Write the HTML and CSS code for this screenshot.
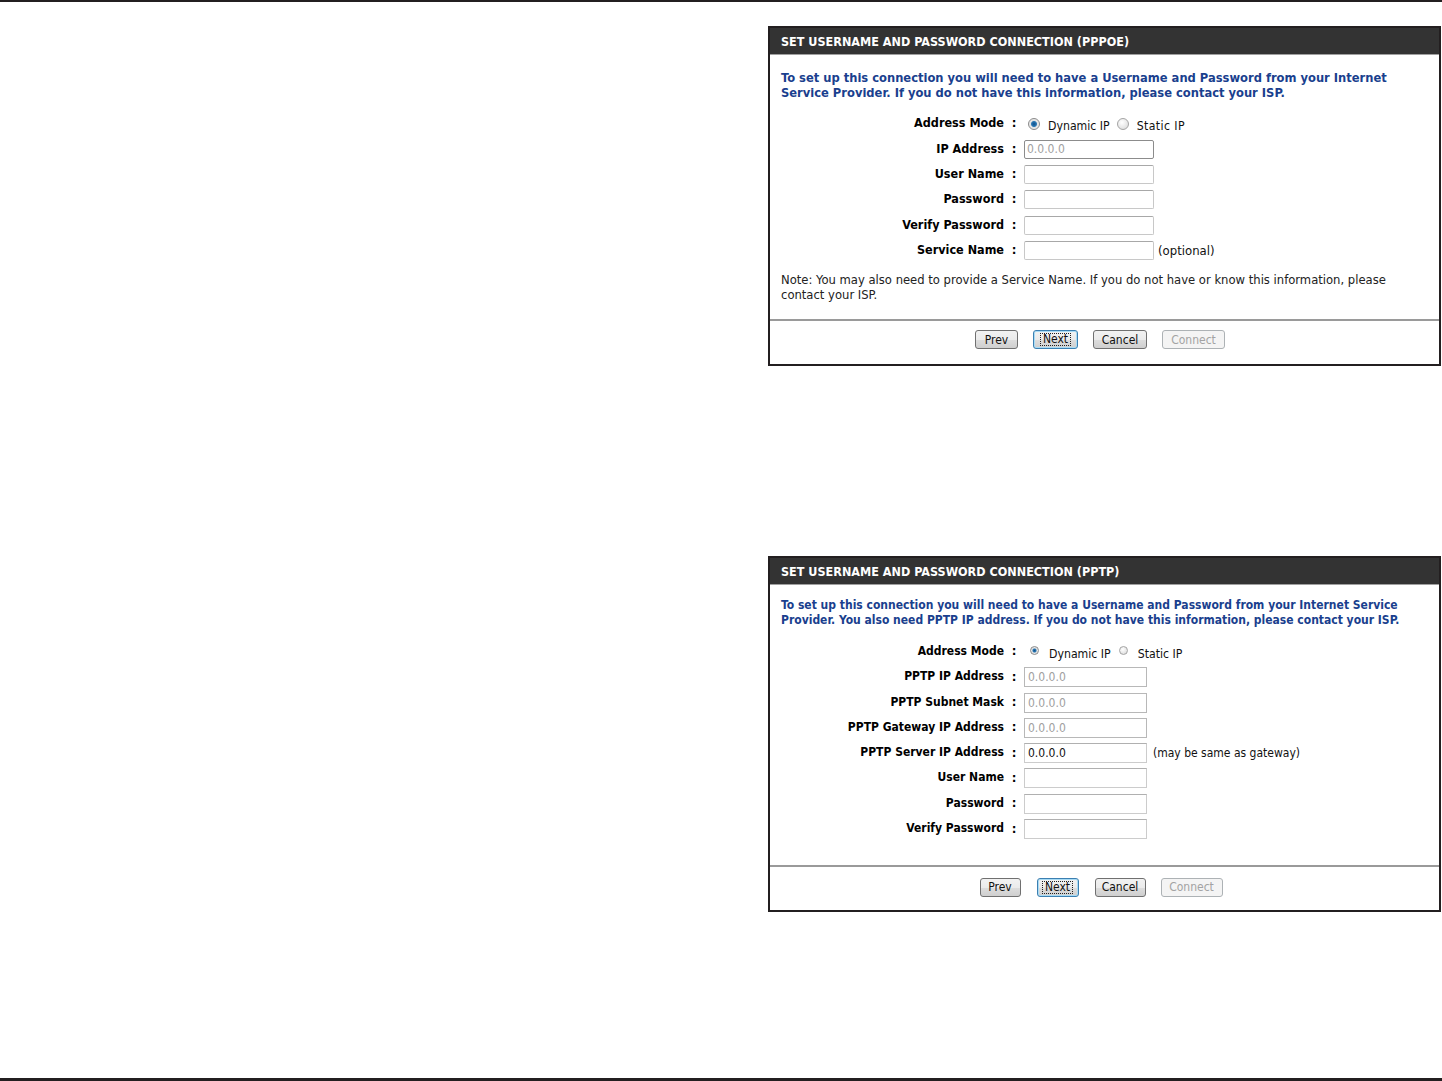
FILE: index.html
```html
<!DOCTYPE html>
<html lang="en">
  <head>
    <meta charset="UTF-8" />
    <title>Internet Connection Setup</title>
    <link rel="stylesheet" href="styles.css">
  </head>

  <body>
    <div class="page">
      <div class="topRule"></div>
      <div class="content">
        <!-- PPPoE -->
        <div class="box boxPppoe">
          <div class="boxTitle">SET USERNAME AND PASSWORD CONNECTION (PPPOE)</div>
          <div class="boxBody">
            <div class="intro">To set up this connection you will need to have a Username and Password from your Internet<br>Service Provider. If you do not have this information, please contact your ISP.</div>
            <div class="rows">
              <div class="row">
                <span class="label">Address Mode</span><span class="colon">:</span>
                <span class="radio on"></span><span class="radioText">Dynamic IP</span>
                <span class="radio"></span><span class="radioText wide">Static IP</span>
              </div>
              <div class="row">
                <span class="label">IP Address</span><span class="colon">:</span>
                <span class="field dim">0.0.0.0</span>
              </div>
              <div class="row">
                <span class="label">User Name</span><span class="colon">:</span>
                <span class="field"></span>
              </div>
              <div class="row">
                <span class="label">Password</span><span class="colon">:</span>
                <span class="field"></span>
              </div>
              <div class="row">
                <span class="label">Verify Password</span><span class="colon">:</span>
                <span class="field"></span>
              </div>
              <div class="row">
                <span class="label">Service Name</span><span class="colon">:</span>
                <span class="field"></span><span class="hint">(optional)</span>
              </div>
            </div>
            <div class="note">Note: You may also need to provide a Service Name. If you do not have or know this information, please<br>contact your ISP.</div>
          </div>
          <div class="buttons">
            <span class="btn bPrev">Prev</span>
            <span class="btn bNext focus"><span class="dots">Next</span></span>
            <span class="btn bCancel">Cancel</span>
            <span class="btn bConnect off">Connect</span>
          </div>
        </div>

        <!-- PPTP -->
        <div class="box boxPptp">
          <div class="boxTitle">SET USERNAME AND PASSWORD CONNECTION (PPTP)</div>
          <div class="boxBody">
            <div class="intro">To set up this connection you will need to have a Username and Password from your Internet Service<br>Provider. You also need PPTP IP address. If you do not have this information, please contact your ISP.</div>
            <div class="rows">
              <div class="row">
                <span class="label">Address Mode</span><span class="colon">:</span>
                <span class="radio on"></span><span class="radioText">Dynamic IP</span>
                <span class="radio"></span><span class="radioText">Static IP</span>
              </div>
              <div class="row">
                <span class="label">PPTP IP Address</span><span class="colon">:</span>
                <span class="field dim">0.0.0.0</span>
              </div>
              <div class="row">
                <span class="label">PPTP Subnet Mask</span><span class="colon">:</span>
                <span class="field dim">0.0.0.0</span>
              </div>
              <div class="row">
                <span class="label">PPTP Gateway IP Address</span><span class="colon">:</span>
                <span class="field dim">0.0.0.0</span>
              </div>
              <div class="row">
                <span class="label">PPTP Server IP Address</span><span class="colon">:</span>
                <span class="field">0.0.0.0</span><span class="hint">(may be same as gateway)</span>
              </div>
              <div class="row">
                <span class="label">User Name</span><span class="colon">:</span>
                <span class="field"></span>
              </div>
              <div class="row">
                <span class="label">Password</span><span class="colon">:</span>
                <span class="field"></span>
              </div>
              <div class="row">
                <span class="label">Verify Password</span><span class="colon">:</span>
                <span class="field"></span>
              </div>
            </div>
          </div>
          <div class="buttons">
            <span class="btn bPrev">Prev</span>
            <span class="btn bNext focus"><span class="dots">Next</span></span>
            <span class="btn bCancel">Cancel</span>
            <span class="btn bConnect off">Connect</span>
          </div>
        </div>
      </div>
      <div class="bottomRule"></div>
    </div>
  </body>
</html>
```

FILE: styles.css
```css
body {
  margin: 0;
  padding: 0;
  background: #ffffff;
  font-family: "DejaVu Sans Condensed", "DejaVu Sans", "Liberation Sans", sans-serif;
  color: #000000;
}

.page {
  display: flex;
  flex-direction: column;
  height: 1081px;
}

.topRule {
  height: 2px;
  background: #231f20;
}

.bottomRule {
  height: 3px;
  background: #231f20;
}

.content {
  flex: 1;
  padding-top: 24px;
  padding-left: 768px;
}

.box {
  width: 669px;
  border: 2px solid #231f20;
  background: #ffffff;
}

.boxPptp {
  margin-top: 190px;
}

.boxTitle {
  height: 26px;
  line-height: 28px;
  padding-left: 11px;
  background: #333333;
  border-bottom: 1px solid #a0a0a0;
  color: #ffffff;
  font-size: 12.5px;
  font-weight: bold;
  white-space: nowrap;
}

.boxBody {
  padding: 15px 11px 17px 11px;
  border-bottom: 2px solid #9a9a9a;
}

.boxPptp .boxBody {
  padding-top: 13px;
  padding-bottom: 24px;
}

.intro {
  font-size: 12.8px;
  font-weight: bold;
  line-height: 15px;
  color: #1a3f8e;
  white-space: nowrap;
}

.boxPptp .intro {
  font-size: 12px;
}

.rows {
  margin: 10px 0 10px -11px;
}

.boxPptp .rows {
  margin-top: 10px;
  margin-bottom: 0;
}

.row {
  display: flex;
  align-items: center;
  height: 25.4px;
  font-size: 12px;
}

.boxPptp .row {
  height: 25.3px;
}

.label {
  width: 234px;
  text-align: right;
  font-weight: bold;
  font-size: 12.5px;
  white-space: nowrap;
}

.boxPptp .label {
  font-size: 12px;
}

.colon {
  width: 20px;
  text-align: center;
  font-weight: bold;
  font-size: 13px;
}

.radio {
  width: 12px;
  height: 12px;
  margin: 2px 8px 0 4px;
  border: 1px solid #a4a4a4;
  border-radius: 50%;
  background: radial-gradient(circle at 40% 35%, #ffffff 0%, #dcdcdc 85%);
  box-sizing: border-box;
}

.radio.on {
  background: radial-gradient(circle, #0d4f8a 0, #2b78b4 2.5px, #e2e2e2 3.5px, #f7f7f7 100%);
  border-color: #8a8a8a;
}

.boxPptp .radio {
  width: 9px;
  height: 9px;
  margin: 0 10px 0 6px;
}

.boxPptp .radio.on {
  background: radial-gradient(circle, #0d4f8a 0, #2b78b4 1.5px, #e2e2e2 2.5px, #f7f7f7 100%);
}

.radioText {
  margin-right: 3px;
  font-size: 12.2px;
  color: #111111;
  position: relative;
  top: 3px;
}

.radioText.wide {
  letter-spacing: 0.4px;
}

.boxPptp .radioText {
  margin-right: 2px;
}

.field {
  width: 130px;
  height: 19px;
  box-sizing: border-box;
  padding-left: 2px;
  border: 1px solid #c8c8c8;
  border-top-color: #a8a8a8;
  border-radius: 2px;
  font-size: 12px;
  line-height: 17px;
  color: #111111;
  position: relative;
  top: 1px;
}

.field.dim {
  color: #a0a0a0;
  border-color: #8c8c8c;
}

.boxPptp .field {
  width: 123px;
  height: 20px;
  border-radius: 0;
  border-color: #cccccc;
  border-top-color: #b0b0b0;
  padding-left: 3px;
  line-height: 18px;
}

.boxPptp .field.dim {
  border-color: #b8b8b8;
}

.hint {
  margin-left: 4px;
  font-size: 13px;
  color: #111111;
  position: relative;
  top: 1px;
}

.boxPptp .hint {
  margin-left: 6px;
  font-size: 12px;
}

.note {
  font-size: 12.9px;
  line-height: 15px;
  color: #222222;
  white-space: nowrap;
}

.buttons {
  display: flex;
  justify-content: center;
  gap: 15px;
  padding: 9px 9px 15px 0;
}

.boxPptp .buttons {
  gap: 15px;
  padding: 11px 7px 13px 0;
}

.btn {
  display: flex;
  align-items: center;
  justify-content: center;
  height: 19px;
  box-sizing: border-box;
  border: 1px solid #707070;
  border-radius: 3px;
  background: linear-gradient(#f2f2f2 0%, #ebebeb 50%, #dddddd 51%, #cfcfcf 100%);
  font-size: 12px;
  color: #111111;
}

.bPrev {
  width: 43px;
}

.bNext {
  width: 45px;
}

.bCancel {
  width: 54px;
}

.bConnect {
  width: 63px;
}

.boxPptp .bPrev {
  width: 41px;
}

.boxPptp .bNext {
  width: 42px;
  margin-left: 1px;
}

.boxPptp .bCancel {
  width: 51px;
  margin-left: 1px;
}

.boxPptp .bConnect {
  width: 62px;
}

.btn.focus {
  border-color: #3c7fb1;
  box-shadow: inset 0 0 0 1px #a8dcf6;
}

.dots {
  padding: 0 3px;
  line-height: 13px;
  outline: 1px dotted #222222;
  outline-offset: -1px;
}

.btn.off {
  border-color: #adb2b5;
  background: #f4f4f4;
  color: #a3a3a3;
}
```
